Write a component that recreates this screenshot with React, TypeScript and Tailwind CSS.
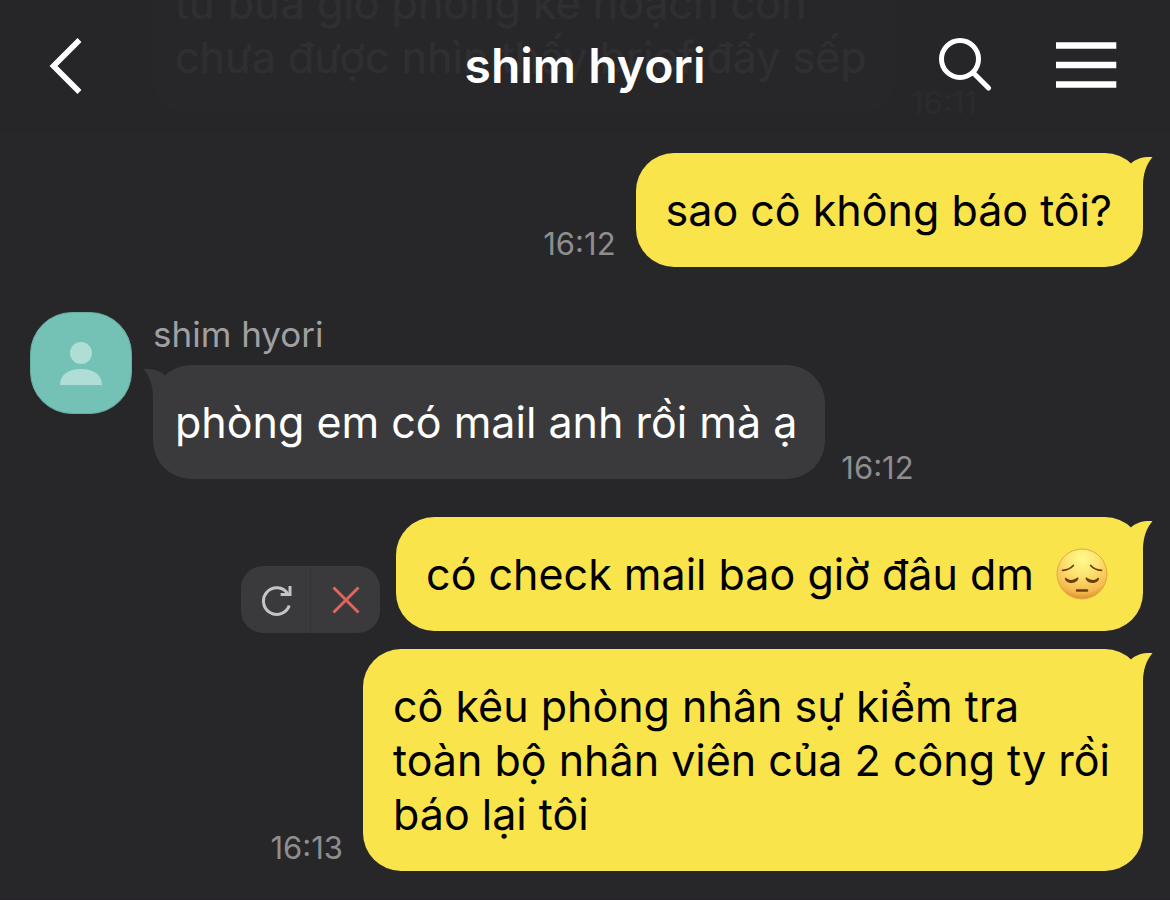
import type { ReactNode } from 'react';

type MessageProps = {
    time?: string;
    children: ReactNode;
};

const Tail = ({ className }: { className: string }) => (
    <svg className={className} width="34" height="40" viewBox="0 0 34 40" fill="currentColor" aria-hidden="true">
        <path d="M11 10.4C16.5 5.4 23 3.6 32.5 4C26.2 11.6 23 21 23 33V39H6Z" />
    </svg>
);

const PensiveFace = () => (
    <svg
        className="-my-2 mr-1 ml-2.5 inline-block size-[52px] align-[-2px]"
        viewBox="0 0 52 52"
        role="img"
        aria-label="😔"
    >
        <defs>
            <radialGradient id="face" cx="0.5" cy="0.2" r="0.82">
                <stop offset="0" stopColor="#fffa8c" />
                <stop offset="0.4" stopColor="#fde372" />
                <stop offset="0.8" stopColor="#f5bb50" />
                <stop offset="1" stopColor="#dd8a2b" />
            </radialGradient>
        </defs>
        <circle cx="26" cy="26" r="25" fill="url(#face)" stroke="#e5a940" strokeWidth="1" />
        <g fill="none" stroke="#6a3f10" strokeLinecap="round">
            <path d="M6.5 22.3C11.5 22 15 20.3 17.3 17.5" strokeWidth="1.8" />
            <path d="M45.5 22.3C40.5 22 37 20.3 34.7 17.5" strokeWidth="1.8" />
            <path d="M21 42.5H31" strokeWidth="2.6" />
        </g>
        <g fill="#6a3f10">
            <path d="M9 30.2C10 29.2 10.4 30.4 11.5 31C14.3 32.5 17 32.3 19.8 30.6C21 29.8 21.6 29 22.4 30C23 31.4 20 35 15.6 35C11.4 35 8.2 31.6 9 30.2Z" />
            <path d="M43 30.2C42 29.2 41.6 30.4 40.5 31C37.7 32.5 35 32.3 32.2 30.6C31 29.8 30.4 29 29.6 30C29 31.4 32 35 36.4 35C40.6 35 43.8 31.6 43 30.2Z" />
        </g>
    </svg>
);

const RetryControls = () => (
    <div className="mr-4 -mb-0.5 flex h-[67px] shrink-0 rounded-[22px] bg-[#3a3a3c]">
        <button type="button" aria-label="Retry" className="flex w-[70px] items-center justify-center border-r border-[#343436]">
            <svg width="34" height="32" viewBox="0 0 34 32" fill="none" stroke="#c4c4c5" strokeWidth="3" aria-hidden="true">
                <path d="M30.3 21.6A13.3 13.3 0 1 1 28.6 9.4" />
                <path d="M31 2V10.6H21.6" />
            </svg>
        </button>
        <button type="button" aria-label="Delete" className="flex w-[69px] items-center justify-center">
            <svg width="28" height="28" viewBox="0 0 28 28" fill="none" stroke="#e0655f" strokeWidth="3" aria-hidden="true">
                <path d="M1.5 1.5L26.5 26.5M26.5 1.5L1.5 26.5" />
            </svg>
        </button>
    </div>
);

const Time = ({ children }: { children: ReactNode }) => (
    <time className="shrink-0 text-[31px] leading-[46px] text-[#8e8e90]">{children}</time>
);

const Sent = ({ time, children }: MessageProps) => (
    <div className="flex items-end justify-end">
        {time ? (
            <div className="mr-5 flex">
                <Time>{time}</Time>
            </div>
        ) : (
            <RetryControls />
        )}
        <div className="relative max-w-[780px] rounded-[38px] bg-[#f9e44c] py-[30px] pr-[31px] pl-[30px] text-black">
            <Tail className="absolute top-0 -right-[11px] text-[#f9e44c]" />
            <p>{children}</p>
        </div>
    </div>
);

const Received = ({ time, tail = true, children }: MessageProps & { tail?: boolean }) => (
    <div className="flex items-end">
        <div className="relative max-w-[742px] rounded-[38px] bg-[#3a3a3c] py-[30px] pr-7 pl-[22px] text-white">
            {tail && <Tail className="absolute top-0 -left-[11px] -scale-x-100 text-[#3a3a3c]" />}
            <p>{children}</p>
        </div>
        <div className="-mb-3 ml-4 flex">
            <Time>{time}</Time>
        </div>
    </div>
);

const Avatar = () => (
    <div className="size-[102px] shrink-0 overflow-hidden rounded-[42px] border border-[#68ab9f] bg-[#74c1b6]">
        <svg viewBox="0 0 100 100" fill="#b0ddd6" aria-hidden="true">
            <circle cx="50" cy="40" r="11" />
            <path d="M29 72C29 62 37 56 50 56S71 62 71 72Z" />
        </svg>
    </div>
);

const Header = () => (
    <header className="absolute inset-x-0 top-0 z-10 grid h-[132px] grid-cols-[1fr_auto_1fr] items-center bg-[#272729]/96 px-[50px] text-white">
        <button type="button" aria-label="Back" className="justify-self-start">
            <svg className="overflow-visible" width="36" height="60" viewBox="2 0 36 60" fill="none" stroke="currentColor" strokeWidth="5.6" aria-hidden="true">
                <path d="M31.5 4L5.5 30L31.5 56" />
            </svg>
        </button>
        <h1 className="text-[48px] leading-[58px] font-semibold">shim hyori</h1>
        <div className="flex items-center justify-self-end gap-16">
            <button type="button" aria-label="Search">
                <svg width="54" height="56" viewBox="0 0 54 56" fill="none" stroke="currentColor" strokeWidth="5" aria-hidden="true">
                    <circle cx="22" cy="21" r="18.5" />
                    <path d="M35.5 35L50.5 50" strokeLinecap="round" />
                </svg>
            </button>
            <button type="button" aria-label="Menu">
                <svg width="64" height="48" viewBox="0 0 64 48" fill="currentColor" aria-hidden="true">
                    <path d="M0 0.3H60.3V6.8H0ZM0 19.7H60.3V26.2H0ZM0 39.2H60.3V45.7H0Z" />
                </svg>
            </button>
        </div>
    </header>
);

const App = () => (
    <div className="relative flex h-screen flex-col justify-end overflow-hidden border-b border-[#2a2027] bg-[#272729] font-[Inter,'Liberation_Sans',sans-serif] text-[43px] leading-[54px]">
        <Header />
        <main className="flex flex-col pr-[27px] pb-7 pl-[30px]">
            <div className="mb-[39px] pl-[123px]">
                <Received time="16:11" tail={false}>
                    từ bữa giờ phòng kế hoạch còn chưa được nhìn thấy brief đấy sếp
                </Received>
            </div>
            <Sent time="16:12">sao cô không báo tôi?</Sent>
            <section className="mt-[45px] mb-[38px] flex gap-[21px]">
                <Avatar />
                <div>
                    <h2 className="pb-[9px] text-[35px] leading-[44px] text-[#a0a0a2]">shim hyori</h2>
                    <Received time="16:12">phòng em có mail anh rồi mà ạ</Received>
                </div>
            </section>
            <div className="flex flex-col gap-[18px]">
                <Sent>
                    có check mail bao giờ đâu dm <PensiveFace />
                </Sent>
                <Sent time="16:13">cô kêu phòng nhân sự kiểm tra toàn bộ nhân viên của 2 công ty rồi báo lại tôi</Sent>
            </div>
        </main>
    </div>
);

export default App;
